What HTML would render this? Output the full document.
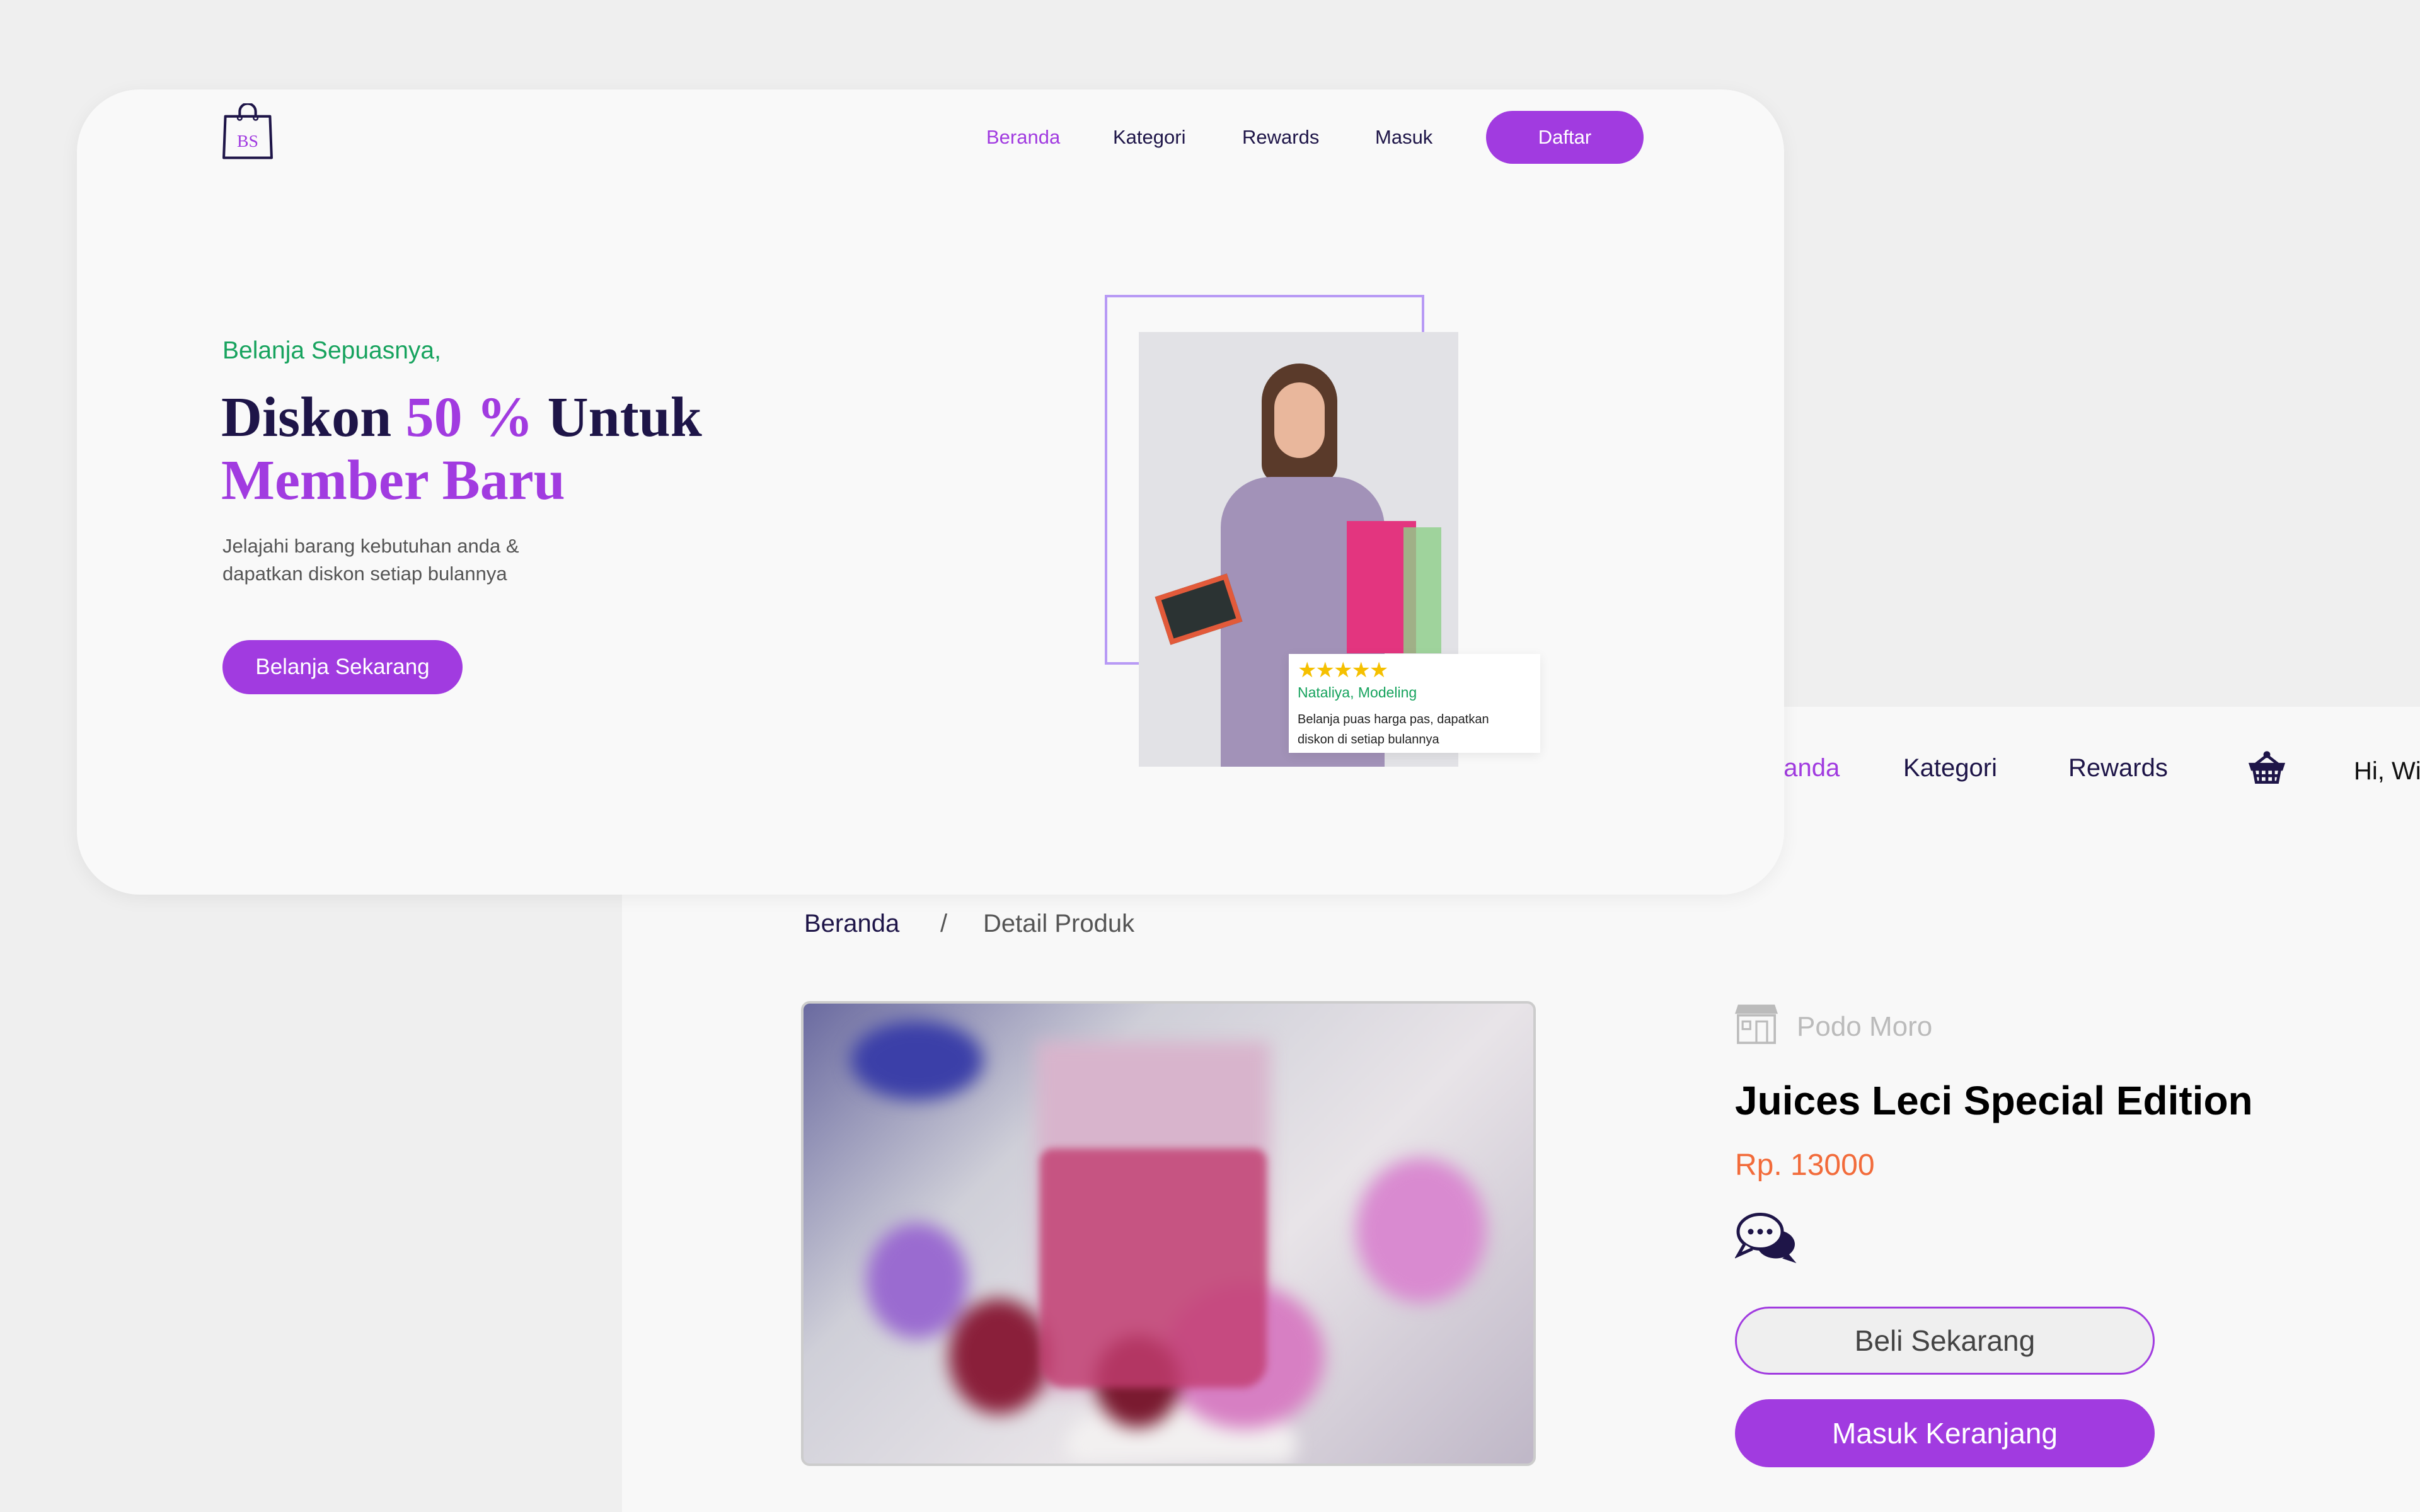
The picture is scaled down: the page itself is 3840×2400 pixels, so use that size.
<!DOCTYPE html>
<html><head><meta charset="utf-8"><style>
*{margin:0;padding:0;box-sizing:border-box}
body{width:3840px;height:2400px;background:#efefef;position:relative;overflow:hidden;font-family:"Liberation Sans",sans-serif}
.a{position:absolute;white-space:nowrap}
.lower{position:absolute;left:987px;top:1122px;right:0;bottom:0;background:#f8f8f8}
.card{position:absolute;left:122px;top:142px;width:2709px;height:1278px;background:#f9f9f9;border-radius:100px;box-shadow:0 6px 30px rgba(0,0,0,.06)}
.nav{font-size:31px;color:#1e1548}
.btn{position:absolute;border-radius:60px;display:flex;align-items:center;justify-content:center;color:#fff;background:#a13be0}
</style></head><body>
<div class="lower">
  <div class="a" style="left:1781px;top:75px;font-size:40px;color:#a13be0">Beranda</div>
  <div class="a" style="left:2033px;top:75px;font-size:40px;color:#1e1548">Kategori</div>
  <div class="a" style="left:2295px;top:75px;font-size:40px;color:#1e1548">Rewards</div>
  <svg class="a" style="left:2579px;top:68px" width="62" height="62" viewBox="0 0 24 24" fill="none" stroke="#1e1548" stroke-width="1.8"><circle cx="12" cy="3" r="1.2"/><path d="M5 9 L12 3.5 L19 9"/><path d="M2 9h20l-1 3H3z" fill="#1e1548"/><path d="M4 12l1.5 8h13L20 12M8 12v8M12 12v8M16 12v8M4.5 16h15"/></svg>
  <div class="a" style="left:2748px;top:80px;font-size:40px;color:#111">Hi, Wi</div>
  <div class="a" style="left:289px;top:322px;font-size:40px;color:#1e1548">Beranda</div>
  <div class="a" style="left:505px;top:322px;font-size:40px;color:#555">/</div>
  <div class="a" style="left:573px;top:322px;font-size:40px;color:#555">Detail Produk</div>
  <div class="a" style="left:284px;top:467px;width:1166px;height:738px;border:4px solid #ccc;border-radius:14px;overflow:hidden;background:linear-gradient(135deg,#6a6aa0 0%,#cfcfd8 30%,#e8e4e8 60%,#bfb7c7 100%)">
    <div style="position:absolute;inset:0;filter:blur(14px);background:
    radial-gradient(ellipse 130px 150px at 310px 560px,#8a1f3a 60%,transparent 62%),
    radial-gradient(ellipse 110px 120px at 530px 600px,#7a1a30 60%,transparent 62%),
    radial-gradient(ellipse 220px 200px at 700px 560px,#d77fc3 55%,transparent 60%),
    radial-gradient(ellipse 180px 200px at 980px 360px,#d98ad0 55%,transparent 60%),
    radial-gradient(ellipse 140px 160px at 180px 440px,#9a6bd0 55%,transparent 60%),
    linear-gradient(#d8b4cc,#d8b4cc) 370px 60px/370px 560px no-repeat,
    radial-gradient(ellipse 200px 120px at 180px 90px,#3b3fa8 50%,transparent 55%),
    radial-gradient(ellipse 300px 120px at 600px 700px,#f2f0f0 60%,transparent 62%)"></div>
    <div style="position:absolute;left:375px;top:230px;width:360px;height:380px;background:#c23d70;border-radius:20px 20px 40px 40px;opacity:.8;filter:blur(6px)"></div>
  </div>
  <svg class="a" style="left:1766px;top:470px" width="68" height="66" viewBox="0 0 28 27"><path d="M2 1h24l2 6H0z" fill="#bbb"/><path d="M2 8h24v18H2z" fill="none" stroke="#bbb" stroke-width="1.5"/><rect x="5" y="12" width="5" height="5" fill="none" stroke="#bbb" stroke-width="1.3"/><rect x="14" y="12" width="7" height="14" fill="none" stroke="#bbb" stroke-width="1.3"/></svg>
  <div class="a" style="left:1766px;top:483px;font-size:44px;color:#bbb;left:1864px">Podo Moro</div>
  <div class="a" style="left:1766px;top:588px;font-size:64px;font-weight:bold;color:#000">Juices Leci Special Edition</div>
  <div class="a" style="left:1766px;top:700px;font-size:48px;color:#f26b3a">Rp. 13000</div>
  <svg class="a" style="left:1766px;top:798px" width="100" height="90" viewBox="0 0 40 36"><ellipse cx="26" cy="22" rx="12" ry="9" fill="#1e1548"/><path d="M34 28l5 6-9-3z" fill="#1e1548"/><ellipse cx="16" cy="14" rx="14" ry="11" fill="#f8f8f8" stroke="#1e1548" stroke-width="2"/><path d="M6 22l-4 7 9-4" fill="#f8f8f8" stroke="#1e1548" stroke-width="2"/><circle cx="10" cy="14" r="1.8" fill="#1e1548"/><circle cx="16" cy="14" r="1.8" fill="#1e1548"/><circle cx="22" cy="14" r="1.8" fill="#1e1548"/></svg>
  <div class="btn" style="left:1766px;top:952px;width:666px;height:108px;background:#efefef;border:3px solid #a13be0;color:#444;font-size:46px">Beli Sekarang</div>
  <div class="btn" style="left:1766px;top:1099px;width:666px;height:108px;font-size:46px">Masuk Keranjang</div>
</div>
<div class="card">
  <svg class="a" style="left:228px;top:22px" width="86" height="92" viewBox="0 0 34 36"><path d="M12 8V5a5 5 0 0 1 10 0v3" fill="none" stroke="#1e1548" stroke-width="1.6"/><circle cx="12" cy="9" r="1.3" fill="none" stroke="#1e1548"/><circle cx="22" cy="9" r="1.3" fill="none" stroke="#1e1548"/><path d="M3 8h28l1 26H2z" fill="none" stroke="#1e1548" stroke-width="1.6" stroke-linejoin="round"/><text x="17" y="27" text-anchor="middle" font-family="Liberation Serif,serif" font-size="11" fill="#a13be0">BS</text></svg>
  <div class="a nav" style="left:1443px;top:58px;color:#a13be0">Beranda</div>
  <div class="a nav" style="left:1644px;top:58px">Kategori</div>
  <div class="a nav" style="left:1849px;top:58px">Rewards</div>
  <div class="a nav" style="left:2060px;top:58px">Masuk</div>
  <div class="btn" style="left:2236px;top:34px;width:250px;height:84px;font-size:31px">Daftar</div>
  <div class="a" style="left:231px;top:393px;font-size:39px;color:#17a35e">Belanja Sepuasnya,</div>
  <div class="a" style="left:229px;top:471px;font-family:'Liberation Serif',serif;font-weight:bold;font-size:90px;color:#1e1548;line-height:100px">Diskon <span style="color:#a13be0">50 %</span> Untuk<br><span style="color:#a13be0">Member Baru</span></div>
  <div class="a" style="left:231px;top:703px;font-size:31px;color:#555;line-height:44px">Jelajahi barang kebutuhan anda &amp;<br>dapatkan diskon setiap bulannya</div>
  <div class="btn" style="left:231px;top:874px;width:381px;height:86px;font-size:35px">Belanja Sekarang</div>
  <div class="a" style="left:1631px;top:326px;width:507px;height:587px;border:4px solid #b89af5"></div>
  <div class="a" style="left:1685px;top:385px;width:507px;height:690px;background:#e2e2e6;overflow:hidden">
    <div style="position:absolute;left:195px;top:50px;width:120px;height:190px;background:#5a3a2a;border-radius:60px 60px 30px 30px"></div>
    <div style="position:absolute;left:215px;top:80px;width:80px;height:120px;background:#e9b79c;border-radius:40px"></div>
    <div style="position:absolute;left:130px;top:230px;width:260px;height:480px;background:#a292b8;border-radius:80px 80px 0 0"></div>
    <div style="position:absolute;left:330px;top:300px;width:110px;height:210px;background:#e3357f"></div>
    <div style="position:absolute;left:420px;top:310px;width:60px;height:200px;background:#8fd08a;opacity:.8"></div>
    <div style="position:absolute;left:35px;top:400px;width:120px;height:80px;background:#2b3333;border:8px solid #e25a3a;transform:rotate(-18deg)"></div>
  </div>
  <div class="a" style="left:1923px;top:896px;width:399px;height:157px;background:#fff;box-shadow:0 4px 16px rgba(0,0,0,.08)">
    <div class="a" style="left:14px;top:6px;font-size:34px;color:#f5c000;letter-spacing:-2px">★★★★★</div>
    <div class="a" style="left:14px;top:48px;font-size:23px;color:#17a35e">Nataliya, Modeling</div>
    <div class="a" style="left:14px;top:88px;font-size:20px;color:#222;line-height:32px">Belanja puas harga pas, dapatkan<br>diskon di setiap bulannya</div>
  </div>
</div>
</body></html>
